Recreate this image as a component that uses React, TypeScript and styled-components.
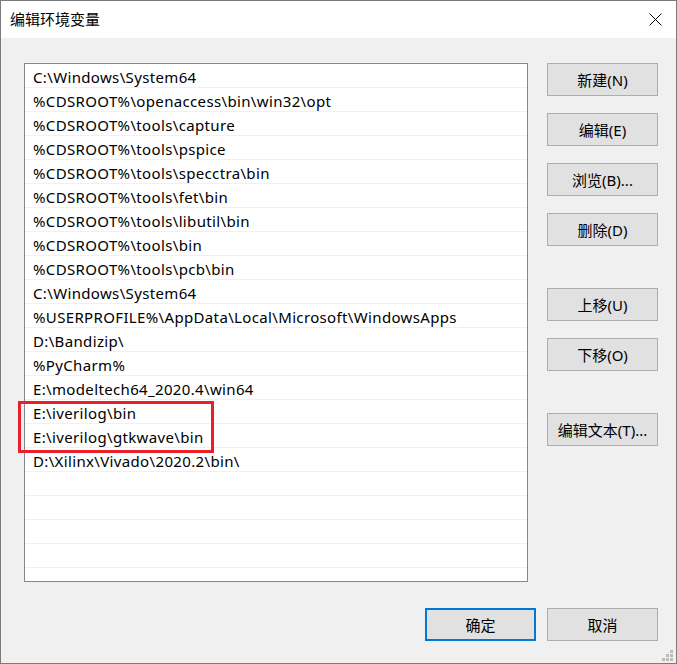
import React from "react";
import styled, { createGlobalStyle } from "styled-components";

const Global = createGlobalStyle`
  html, body { margin: 0; padding: 0; background: #ffffff; }
  * { box-sizing: border-box; }
`;

const FONT = `"Noto Sans", "Noto Sans CJK SC", sans-serif`;

const Window = styled.div`
  position: relative;
  width: 677px;
  height: 664px;
  border: 1px solid #7a7a7a;
  background: #f0f0f0;
  display: flex;
  flex-direction: column;
  font-family: ${FONT};
  font-size: 15px;
  color: #000;
`;

const TitleBar = styled.div`
  height: 37px;
  background: #ffffff;
  display: flex;
  align-items: center;
  justify-content: space-between;
  padding: 0 14px 0 9px;
  flex-shrink: 0;
`;

const Title = styled.div`
  font-family: "Noto Sans CJK SC", sans-serif;
  font-size: 15px;
  line-height: 1;
  padding-bottom: 2px;
`;

const CloseIcon = styled.svg`
  width: 13px;
  height: 13px;
  display: block;
`;

const Body = styled.div`
  flex: 1;
  display: flex;
  flex-direction: column;
  padding: 25px 18px 0 23px;
`;

const Main = styled.div`
  display: flex;
  gap: 19px;
`;

const ListBox = styled.div`
  width: 504px;
  height: 519px;
  border: 1px solid #828790;
  background: #ffffff;
  overflow: hidden;
`;

const Row = styled.div`
  height: 24px;
  border-bottom: 1px solid #f0f0f0;
  padding: 2px 0 0 8px;
  line-height: 22px;
  letter-spacing: 0.35px;
  white-space: nowrap;
`;

const Side = styled.div`
  display: flex;
  flex-direction: column;
`;

const Button = styled.div<{ $gap?: number; $primary?: boolean }>`
  width: 111px;
  height: 33px;
  margin-top: ${(p) => p.$gap ?? 0}px;
  background: #e1e1e1;
  border: ${(p) => (p.$primary ? "2px solid #0078d7" : "1px solid #adadad")};
  display: flex;
  align-items: center;
  justify-content: center;
  padding-bottom: 1px;
  font-size: 15px;
  white-space: nowrap;
`;

const Footer = styled.div`
  display: flex;
  justify-content: flex-end;
  gap: 11px;
  margin-top: 26px;
`;

const Highlight = styled.div`
  position: absolute;
  left: 17px;
  top: 400px;
  width: 196px;
  height: 52px;
  border: 3px solid #e8202a;
  pointer-events: none;
`;

const Grip = styled.svg`
  position: absolute;
  right: 2px;
  bottom: 1px;
  width: 12px;
  height: 12px;
`;

const paths = [
  "C:\\Windows\\System64",
  "%CDSROOT%\\openaccess\\bin\\win32\\opt",
  "%CDSROOT%\\tools\\capture",
  "%CDSROOT%\\tools\\pspice",
  "%CDSROOT%\\tools\\specctra\\bin",
  "%CDSROOT%\\tools\\fet\\bin",
  "%CDSROOT%\\tools\\libutil\\bin",
  "%CDSROOT%\\tools\\bin",
  "%CDSROOT%\\tools\\pcb\\bin",
  "C:\\Windows\\System64",
  "%USERPROFILE%\\AppData\\Local\\Microsoft\\WindowsApps",
  "D:\\Bandizip\\",
  "%PyCharm%",
  "E:\\modeltech64_2020.4\\win64",
  "E:\\iverilog\\bin",
  "E:\\iverilog\\gtkwave\\bin",
  "D:\\Xilinx\\Vivado\\2020.2\\bin\\",
  "",
  "",
  "",
  "",
  "",
];

export default function App() {
  return (
    <>
      <Global />
      <Window>
        <TitleBar>
          <Title>编辑环境变量</Title>
          <CloseIcon viewBox="0 0 13 13">
            <path d="M0.5 0.5 L12.5 12.5 M12.5 0.5 L0.5 12.5" stroke="#000" strokeWidth="1" fill="none" />
          </CloseIcon>
        </TitleBar>
        <Body>
          <Main>
            <ListBox>
              {paths.map((p, i) => (
                <Row key={i}>{p}</Row>
              ))}
            </ListBox>
            <Side>
              <Button>新建(N)</Button>
              <Button $gap={17}>编辑(E)</Button>
              <Button $gap={17}>浏览(B)...</Button>
              <Button $gap={17}>删除(D)</Button>
              <Button $gap={42}>上移(U)</Button>
              <Button $gap={17}>下移(O)</Button>
              <Button $gap={42}>编辑文本(T)...</Button>
            </Side>
          </Main>
          <Footer>
            <Button $primary>确定</Button>
            <Button>取消</Button>
          </Footer>
        </Body>
        <Highlight />
        <Grip viewBox="0 0 12 12">
          <rect x="8" y="0" width="3" height="3" fill="#bcbcbc" />
          <rect x="4" y="4" width="3" height="3" fill="#bcbcbc" />
          <rect x="8" y="4" width="3" height="3" fill="#bcbcbc" />
          <rect x="0" y="8" width="3" height="3" fill="#bcbcbc" />
          <rect x="4" y="8" width="3" height="3" fill="#bcbcbc" />
          <rect x="8" y="8" width="3" height="3" fill="#bcbcbc" />
        </Grip>
      </Window>
    </>
  );
}
